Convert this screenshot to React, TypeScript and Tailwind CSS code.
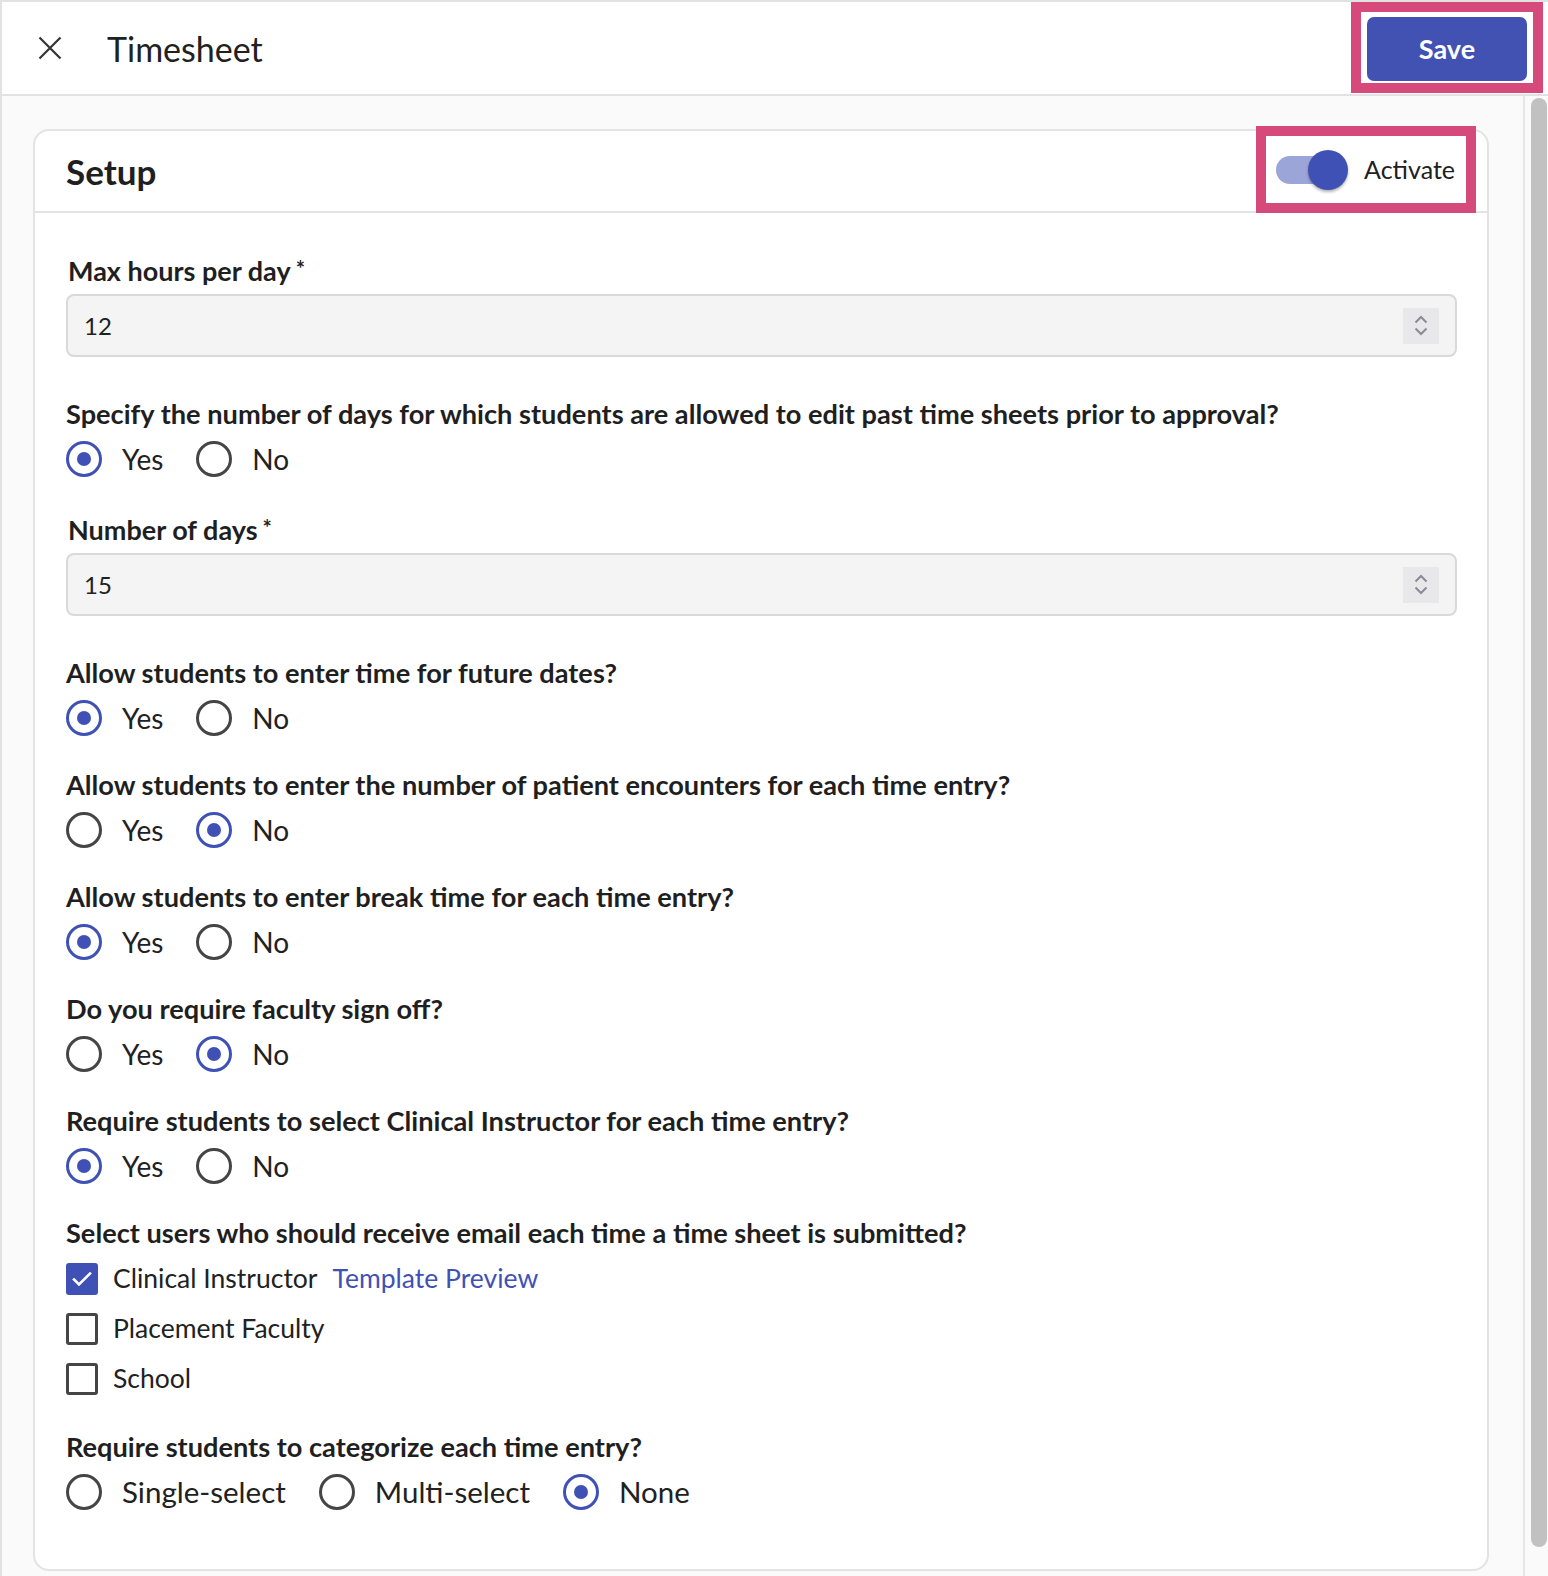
import React from 'react';

const INDIGO = 'bg-[#3f51b5]';

type RadioProps = { checked?: boolean; label: string; large?: boolean };

const Radio: React.FC<RadioProps> = ({ checked, label, large }) => (
  <div className="flex items-center h-[44px]">
    <span
      className={`w-[36px] h-[36px] rounded-full border-[3.5px] flex items-center justify-center shrink-0 ${
        checked ? 'border-[#3f51b5]' : 'border-[#454545]'
      }`}
    >
      {checked && <span className={`w-[14px] h-[14px] rounded-full ${INDIGO}`} />}
    </span>
    <span className={`ml-[20px] text-[#212121] ${large ? 'text-[29.5px]' : 'text-[28px]'}`}>{label}</span>
  </div>
);

const Question: React.FC<{ text: string; className?: string; children: React.ReactNode }> = ({ text, className, children }) => (
  <div className={className}>
    <div className="text-[27.2px] leading-[34px] font-bold text-[#1f1f1f]">{text}</div>
    {children}
  </div>
);

const YesNo: React.FC<{ yes: boolean }> = ({ yes }) => (
  <div className="flex gap-[33px] mt-[6px]">
    <Radio checked={yes} label="Yes" />
    <Radio checked={!yes} label="No" />
  </div>
);

const Checkbox: React.FC<{ checked?: boolean; label: string; children?: React.ReactNode }> = ({ checked, label, children }) => (
  <div className="flex items-center h-[40px]">
    {checked ? (
      <span className={`w-[32px] h-[32px] rounded-[3px] ${INDIGO} flex items-center justify-center`}>
        <svg width="24" height="24" viewBox="0 0 24 24" fill="none">
          <path d="M4 12.5l5 5L20 6.5" stroke="white" strokeWidth="2.6" strokeLinecap="square" />
        </svg>
      </span>
    ) : (
      <span className="w-[32px] h-[32px] rounded-[3px] border-[3.5px] border-[#454545]" />
    )}
    <span className="ml-[15px] text-[26.5px] text-[#212121]">{label}</span>
    {children}
  </div>
);

const NumberField: React.FC<{ label: string; value: string; className?: string }> = ({ label, value, className }) => (
  <div className={className}>
    <div className="text-[27px] leading-[34px] font-bold text-[#1f1f1f] pl-[2px]">
      {label}
      <span className="text-[22px] align-top relative -top-[2px] ml-[5px]">*</span>
    </div>
    <div className="mt-[6px] h-[63px] rounded-[8px] border-2 border-[#d9d9d9] bg-[#f4f4f4] flex items-center justify-between pl-[16px] pr-[16px]">
      <span className="text-[24px] text-[#212121]">{value}</span>
      <span className="w-[36px] h-[36px] bg-[#e8e8eb] flex flex-col items-center justify-center gap-[3px]">
        <svg width="14" height="9" viewBox="0 0 14 9" fill="none">
          <path d="M1.5 7.5L7 2l5.5 5.5" stroke="#8b8b98" strokeWidth="2" />
        </svg>
        <svg width="14" height="9" viewBox="0 0 14 9" fill="none">
          <path d="M1.5 1.5L7 7l5.5-5.5" stroke="#8b8b98" strokeWidth="2" />
        </svg>
      </span>
    </div>
  </div>
);

export default function App() {
  return (
    <div className="w-full h-[1576px] overflow-hidden bg-white font-[Lato,sans-serif] border-l-2 border-[#e2e2e2] flex flex-col">
      {/* Header */}
      <div className="h-[96px] shrink-0 border-t-2 border-b-2 border-[#e2e2e2] flex items-center pl-[36px] pr-[5px]">
        <svg width="24" height="24" viewBox="0 0 24 24" fill="none" className="shrink-0">
          <path d="M1.5 1.5l21 21M22.5 1.5l-21 21" stroke="#333" strokeWidth="2.2" />
        </svg>
        <span className="ml-[45px] text-[34px] text-[#212121]">Timesheet</span>
        <div className="ml-auto self-start h-[91px] border-[10px] border-[#d5497b] pt-[5px] px-[6px]">
          <button className="w-[160px] h-[64px] rounded-[7px] bg-[#4152b3] text-white text-[27px] font-bold">
            Save
          </button>
        </div>
      </div>

      {/* Body */}
      <div className="flex-1 flex bg-[#fafafa] min-h-0">
        <div className="flex-1 pl-[31px] pr-[34px] pt-[33px]">
          <div className="bg-white border-2 border-[#e3e3e3] rounded-[16px]">
            {/* Card header */}
            <div className="h-[82px] border-b-2 border-[#e3e3e3] flex items-stretch justify-between pl-[31px] pr-[11px]">
              <span className="self-center text-[35px] font-bold text-[#1f1f1f]">Setup</span>
              <div className="-mt-[5px] -mb-[2px] border-[10px] border-[#d5497b] bg-white flex items-center pl-[10px] pr-[11px]">
                <div className="relative w-[72px] h-[40px] flex items-center">
                  <span className="w-[68px] h-[28px] rounded-full bg-[#9ca5d8]" />
                  <span className={`absolute right-0 top-0 w-[40px] h-[40px] rounded-full ${INDIGO} shadow-[0_2px_3px_rgba(0,0,0,0.3)]`} />
                </div>
                <span className="ml-[16px] text-[25px] text-[#212121]">Activate</span>
              </div>
            </div>

            {/* Card body */}
            <div className="pt-[41px] pl-[31px] pr-[30px] pb-[55px] flex flex-col">
              <NumberField label="Max hours per day" value="12" />

              <Question
                className="mt-[40px]"
                text="Specify the number of days for which students are allowed to edit past time sheets prior to approval?"
              >
                <YesNo yes />
              </Question>

              <NumberField className="mt-[32px]" label="Number of days" value="15" />

              <Question className="mt-[40px]" text="Allow students to enter time for future dates?">
                <YesNo yes />
              </Question>

              <Question className="mt-[28px]" text="Allow students to enter the number of patient encounters for each time entry?">
                <YesNo yes={false} />
              </Question>

              <Question className="mt-[28px]" text="Allow students to enter break time for each time entry?">
                <YesNo yes />
              </Question>

              <Question className="mt-[28px]" text="Do you require faculty sign off?">
                <YesNo yes={false} />
              </Question>

              <Question className="mt-[28px]" text="Require students to select Clinical Instructor for each time entry?">
                <YesNo yes />
              </Question>

              <Question className="mt-[28px]" text="Select users who should receive email each time a time sheet is submitted?">
                <div className="mt-[9px] flex flex-col gap-[10px]">
                  <Checkbox checked label="Clinical Instructor">
                    <span className="ml-[15px] text-[26.5px] text-[#3f51b5]">Template Preview</span>
                  </Checkbox>
                  <Checkbox label="Placement Faculty" />
                  <Checkbox label="School" />
                </div>
              </Question>

              <Question className="mt-[31px]" text="Require students to categorize each time entry?">
                <div className="flex gap-[33px] mt-[6px]">
                  <Radio large label="Single-select" />
                  <Radio large label="Multi-select" />
                  <Radio large checked label="None" />
                </div>
              </Question>
            </div>
          </div>
        </div>

        {/* Scrollbar */}
        <div className="w-[25px] shrink-0 border-l-2 border-[#e6e6e6] pl-[6px] pr-[1px] pt-[2px] pb-[29px] flex">
          <div className="flex-1 rounded-full bg-[#c1c1c1]" />
        </div>
      </div>
    </div>
  );
}
